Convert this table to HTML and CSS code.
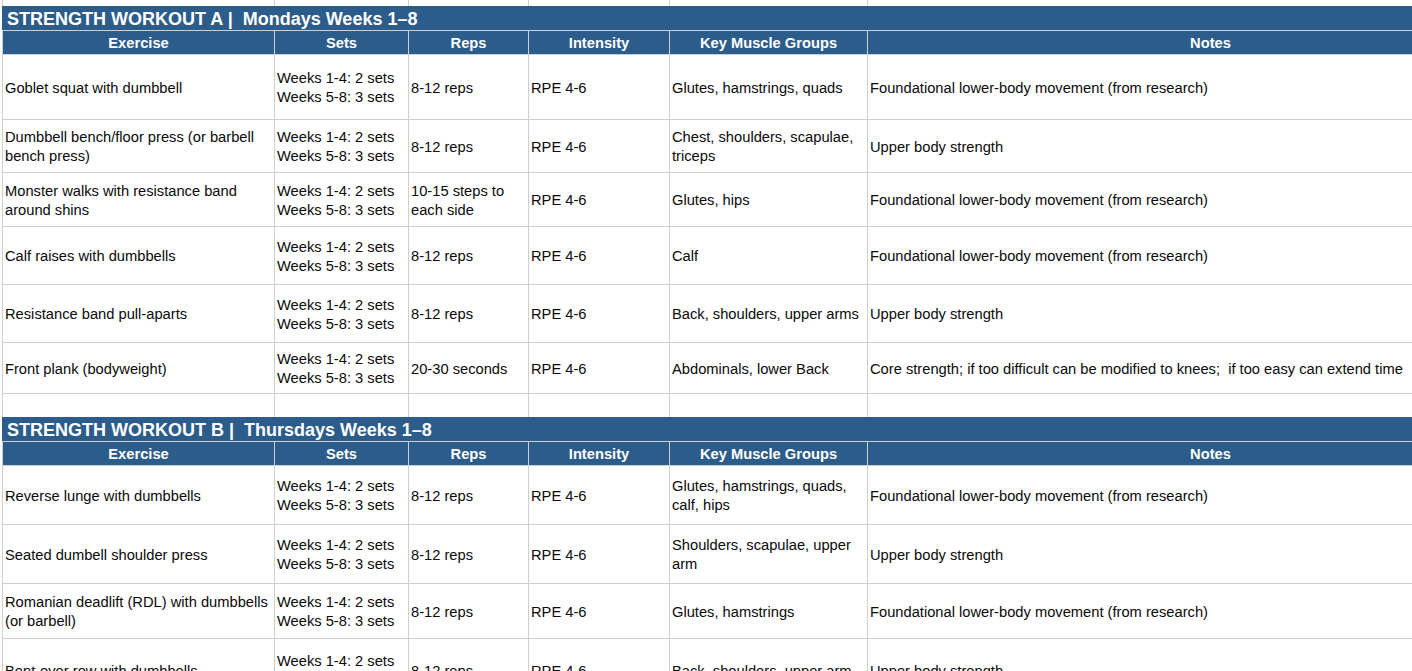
FILE: index.html
```html
<!DOCTYPE html>
<html>
<head>
<meta charset="utf-8">
<title>Strength Workouts</title>
<link rel="stylesheet" href="styles.css">
</head>
<body>
<table class="sheet">
  <colgroup>
    <col class="c-ex"><col class="c-sets"><col class="c-reps"><col class="c-int"><col class="c-mus"><col class="c-notes">
  </colgroup>
  <tbody>
    <tr class="r-top"><td></td><td></td><td></td><td></td><td></td><td></td></tr>
    <tr class="r-title"><td colspan="6">STRENGTH WORKOUT A |&nbsp; Mondays Weeks 1–8</td></tr>
    <tr class="r-head"><th>Exercise</th><th>Sets</th><th>Reps</th><th>Intensity</th><th>Key Muscle Groups</th><th>Notes</th></tr>
    <tr class="h65"><td>Goblet squat with dumbbell</td><td>Weeks 1-4: 2 sets<br>Weeks 5-8: 3 sets</td><td>8-12 reps</td><td>RPE 4-6</td><td>Glutes, hamstrings, quads</td><td>Foundational lower-body movement (from research)</td></tr>
    <tr class="h53"><td>Dumbbell bench/floor press (or barbell bench press)</td><td>Weeks 1-4: 2 sets<br>Weeks 5-8: 3 sets</td><td>8-12 reps</td><td>RPE 4-6</td><td>Chest, shoulders, scapulae, triceps</td><td>Upper body strength</td></tr>
    <tr class="h54"><td>Monster walks with resistance band around shins</td><td>Weeks 1-4: 2 sets<br>Weeks 5-8: 3 sets</td><td>10-15 steps to each side</td><td>RPE 4-6</td><td>Glutes, hips</td><td>Foundational lower-body movement (from research)</td></tr>
    <tr class="h58"><td>Calf raises with dumbbells</td><td>Weeks 1-4: 2 sets<br>Weeks 5-8: 3 sets</td><td>8-12 reps</td><td>RPE 4-6</td><td>Calf</td><td>Foundational lower-body movement (from research)</td></tr>
    <tr class="h58"><td>Resistance band pull-aparts</td><td>Weeks 1-4: 2 sets<br>Weeks 5-8: 3 sets</td><td>8-12 reps</td><td>RPE 4-6</td><td>Back, shoulders, upper arms</td><td>Upper body strength</td></tr>
    <tr class="h51"><td>Front plank (bodyweight)</td><td>Weeks 1-4: 2 sets<br>Weeks 5-8: 3 sets</td><td>20-30 seconds</td><td>RPE 4-6</td><td>Abdominals, lower Back</td><td>Core strength; if too difficult can be modified to knees;&nbsp; if too easy can extend time</td></tr>
    <tr class="r-gap"><td></td><td></td><td></td><td></td><td></td><td></td></tr>
    <tr class="r-title"><td colspan="6">STRENGTH WORKOUT B |&nbsp; Thursdays Weeks 1–8</td></tr>
    <tr class="r-head"><th>Exercise</th><th>Sets</th><th>Reps</th><th>Intensity</th><th>Key Muscle Groups</th><th>Notes</th></tr>
    <tr class="h59"><td>Reverse lunge with dumbbells</td><td>Weeks 1-4: 2 sets<br>Weeks 5-8: 3 sets</td><td>8-12 reps</td><td>RPE 4-6</td><td>Glutes, hamstrings, quads, calf, hips</td><td>Foundational lower-body movement (from research)</td></tr>
    <tr class="h59"><td>Seated dumbell shoulder press</td><td>Weeks 1-4: 2 sets<br>Weeks 5-8: 3 sets</td><td>8-12 reps</td><td>RPE 4-6</td><td>Shoulders, scapulae, upper arm</td><td>Upper body strength</td></tr>
    <tr class="h55"><td>Romanian deadlift (RDL) with dumbbells (or barbell)</td><td>Weeks 1-4: 2 sets<br>Weeks 5-8: 3 sets</td><td>8-12 reps</td><td>RPE 4-6</td><td>Glutes, hamstrings</td><td>Foundational lower-body movement (from research)</td></tr>
    <tr class="h63"><td>Bent-over row with dumbbells</td><td>Weeks 1-4: 2 sets<br>Weeks 5-8: 3 sets</td><td>8-12 reps</td><td>RPE 4-6</td><td>Back, shoulders, upper arm</td><td>Upper body strength</td></tr>
  </tbody>
</table>
</body>
</html>
```

FILE: styles.css
```css
html, body {
  margin: 0;
  padding: 0;
  background: #ffffff;
  overflow: hidden;
}

body {
  font-family: "Liberation Sans", Arial, sans-serif;
  font-size: 14.7px;
  color: #0a0a0a;
}

.sheet {
  border-collapse: collapse;
  table-layout: fixed;
  width: 1551px;
  margin-left: 2px;
}

.c-ex { width: 272px; }
.c-sets { width: 134px; }
.c-reps { width: 120px; }
.c-int { width: 141px; }
.c-mus { width: 198px; }
.c-notes { width: 686px; }

.sheet td,
.sheet th {
  border: 1px solid #cfcfcf;
  padding: 3px 2px 0 2px;
  vertical-align: middle;
  line-height: 19px;
  text-align: left;
  overflow: hidden;
  font-weight: normal;
}

.r-top { height: 6px; }
.r-top td { padding: 0; border-top: none; border-bottom-color: #2c5c8a; }

.r-gap { height: 24px; }
.r-gap td { padding: 0; border-bottom-color: #2c5c8a; }

.r-title { height: 24px; }
.r-title td {
  background: #2c5c8a;
  color: #ffffff;
  font-weight: bold;
  font-size: 18px;
  line-height: 20px;
  padding: 2px 4px 0 4px;
  white-space: nowrap;
  border-left-color: #2c5c8a;
  border-bottom-color: #c9d0d8;
}

.r-head { height: 24px; }
.r-head th {
  background: #2c5c8a;
  color: #ffffff;
  font-weight: bold;
  text-align: center;
  line-height: 18px;
  padding: 2px 2px 0 2px;
  border-color: #c9d0d8;
}

.h51 { height: 51px; }
.h53 { height: 53px; }
.h54 { height: 54px; }
.h55 { height: 55px; }
.h58 { height: 58px; }
.h59 { height: 59px; }
.h63 { height: 63px; }
.h65 { height: 65px; }
```
